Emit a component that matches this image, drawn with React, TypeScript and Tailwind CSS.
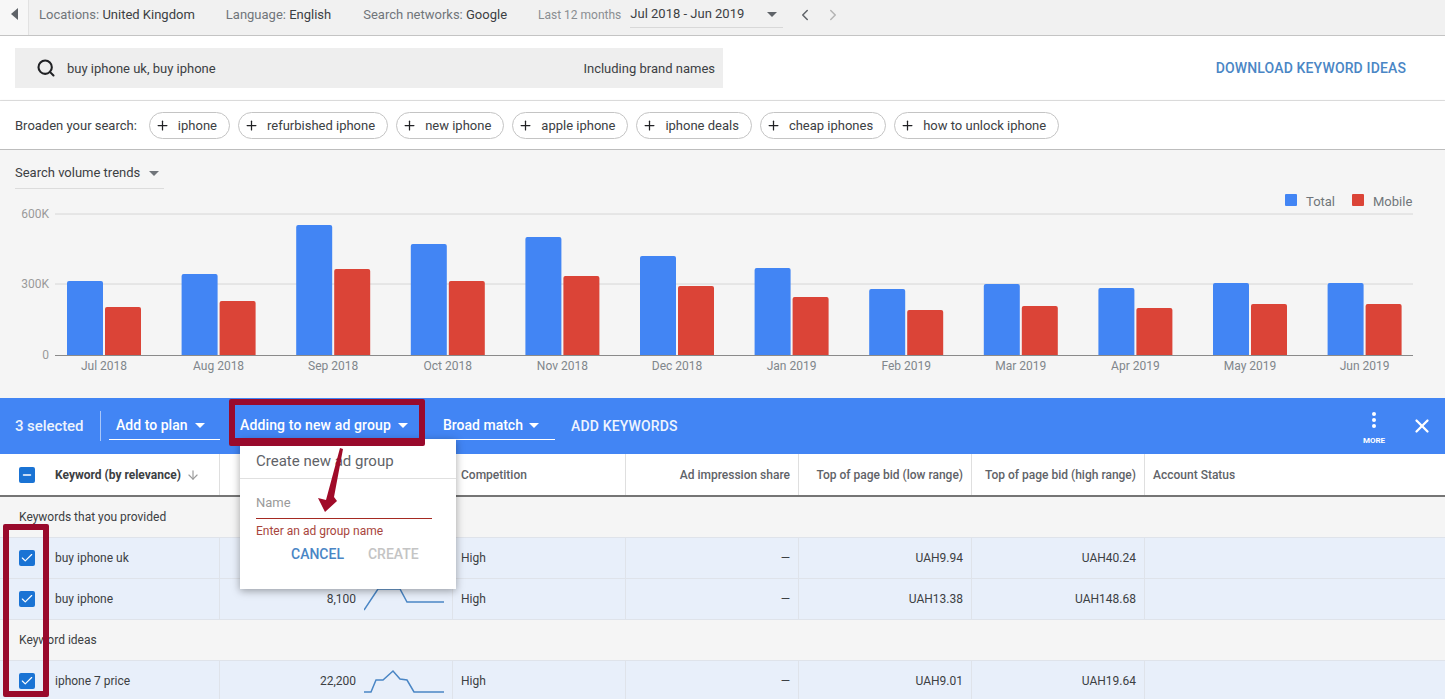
import { ChevronLeft, ChevronRight, Plus, Search, X, ArrowDown, Check, Minus } from 'lucide-react';

const chips = ['iphone', 'refurbished iphone', 'new iphone', 'apple iphone', 'iphone deals', 'cheap iphones', 'how to unlock iphone'];

const months = [
  { label: 'Jul 2018', total: 281, mobile: 307 },
  { label: 'Aug 2018', total: 274, mobile: 301 },
  { label: 'Sep 2018', total: 225, mobile: 269 },
  { label: 'Oct 2018', total: 244, mobile: 281 },
  { label: 'Nov 2018', total: 237, mobile: 276 },
  { label: 'Dec 2018', total: 256, mobile: 286 },
  { label: 'Jan 2019', total: 268, mobile: 297 },
  { label: 'Feb 2019', total: 289, mobile: 310 },
  { label: 'Mar 2019', total: 284, mobile: 306 },
  { label: 'Apr 2019', total: 288, mobile: 308 },
  { label: 'May 2019', total: 283, mobile: 304 },
  { label: 'Jun 2019', total: 283, mobile: 304 },
];

const BASE = 355;
const TOP = 150;

function Caret({ className }: { className: string }) {
  return (
    <svg className={className} width="10" height="5" viewBox="0 0 10 5">
      <path d="M0 0h10L5 5z" fill="currentColor" />
    </svg>
  );
}

function RowCheck() {
  return (
    <span className="flex h-4 w-4 items-center justify-center rounded-[2px] bg-[#1a73d4]">
      <Check className="h-3.5 w-3.5 text-white" strokeWidth={2} />
    </span>
  );
}

function Spark({ points }: { points: string }) {
  return (
    <svg width="80" height="40" viewBox="0 0 80 40" className="ml-2 shrink-0">
      <polyline points={points} fill="none" stroke="#4a86c5" strokeWidth="1.5" />
    </svg>
  );
}

function Row({ name, count, spark, low, high }: { name: string; count?: string; spark: string; low: string; high: string }) {
  return (
    <div className="flex h-[41px] shrink-0 border-b border-[#dfe3ea] bg-[#e8effa] text-xs text-[#3c4043]">
      <div className="flex w-[220px] shrink-0 items-center border-r border-[#dfe3ea] pl-[19px]">
        <RowCheck />
        <span className="ml-5">{name}</span>
      </div>
      <div className="flex w-[233px] shrink-0 items-center justify-end border-r border-[#dfe3ea] pr-2">
        {count && <span>{count}</span>}
        <Spark points={spark} />
      </div>
      <div className="flex w-[173px] shrink-0 items-center border-r border-[#dfe3ea] pl-2">High</div>
      <div className="flex w-[173px] shrink-0 items-center justify-end border-r border-[#dfe3ea] pr-2">—</div>
      <div className="flex w-[173px] shrink-0 items-center justify-end border-r border-[#dfe3ea] pr-2">{low}</div>
      <div className="flex w-[173px] shrink-0 items-center justify-end border-r border-[#dfe3ea] pr-2">{high}</div>
      <div className="flex-1" />
    </div>
  );
}

function GroupRow({ label }: { label: string }) {
  return (
    <div className="flex h-[41px] shrink-0 items-center border-b border-[#dfe3ea] bg-[#f5f5f5] pl-[19px] text-xs text-[#3c4043]">
      {label}
    </div>
  );
}

export default function App() {
  return (
    <div className="relative h-[699px] w-[1445px] overflow-hidden bg-white font-['Roboto',sans-serif] text-[#3c4043]">
      {/* filter summary */}
      <div className="flex h-9 items-center border-b border-[#c4c4c4] bg-[#f1f1f1] pb-[6px] text-[13px]">
        <div className="-mb-[6px] flex h-[35px] w-[29px] items-center justify-center border-r border-[#e2e2e2] bg-[#f7f7f7] pb-2">
          <svg width="7" height="12" viewBox="0 0 7 12"><path d="M7 0v12L0 6z" fill="#5f6368" /></svg>
        </div>
        <span className="ml-[10px] text-[#70757a]">Locations: <span className="text-[#3c4043]">United Kingdom</span></span>
        <span className="ml-[31px] text-[#70757a]">Language: <span className="text-[#3c4043]">English</span></span>
        <span className="ml-[32px] text-[#70757a]">Search networks: <span className="text-[#3c4043]">Google</span></span>
        <span className="ml-[31px] text-xs text-[#8a8e92]">Last 12 months</span>
        <div className="ml-[9px] flex h-[26px] w-[153px] items-center border-b border-[#d8d8d8]">
          <span>Jul 2018 - Jun 2019</span>
          <Caret className="ml-auto mr-[6px] text-[#5f6368]" />
        </div>
        <ChevronLeft className="ml-[13px] h-[18px] w-[18px] text-[#5f6368]" />
        <ChevronRight className="ml-[10px] h-[18px] w-[18px] text-[#b4b4b4]" />
      </div>

      {/* search */}
      <div className="flex h-[65px] items-center border-b border-[#e4e4e4] pl-[15px]">
        <div className="flex h-10 w-[708px] items-center bg-[#eeeeee] pl-[21px] pr-2 pt-[1px] text-[13px]">
          <Search className="-mt-[2px] h-5 w-5 text-[#202124]" strokeWidth={2.5} />
          <span className="ml-[11px]">buy iphone uk, buy iphone</span>
          <span className="ml-auto">Including brand names</span>
        </div>
        <span className="ml-auto mr-[39px] text-sm font-medium tracking-[0.14px] text-[#4a86c5]">DOWNLOAD KEYWORD IDEAS</span>
      </div>

      {/* broaden */}
      <div className="relative flex h-[49px] items-center border-b border-[#bdbdbd] pl-[15px] pt-[1px] text-[13px] shadow-[0_1px_3px_rgba(0,0,0,0.25)]">
        <span>Broaden your search:</span>
        <div className="ml-3 flex gap-2">
          {chips.map(chip => (
            <span key={chip} className="flex h-[27px] items-center rounded-[14px] border border-[#c4c4c4] bg-white pl-[5px] pr-3">
              <Plus className="h-[15px] w-[15px] text-[#202124]" strokeWidth={2} />
              <span className="ml-2">{chip}</span>
            </span>
          ))}
        </div>
      </div>

      {/* trends */}
      <div className="relative h-[248px] bg-[#f5f5f5]">
        <div className="ml-[15px] flex h-[39px] w-[149px] items-center border-b border-[#dcdcdc] pt-2 text-[13px]">
          <span>Search volume trends</span>
          <Caret className="ml-[9px] text-[#70757a]" />
        </div>
        <svg width="1445" height="248" viewBox="0 0 1445 248" className="absolute left-0 top-0 font-['Roboto',sans-serif]">
          <line x1="55" x2="1413" y1={214 - TOP} y2={214 - TOP} stroke="#d6d6d6" />
          <line x1="55" x2="1413" y1={284 - TOP} y2={284 - TOP} stroke="#d6d6d6" />
          <text x="49" y={218 - TOP} textAnchor="end" fontSize="12" fill="#9a9a9a">600K</text>
          <text x="49" y={288 - TOP} textAnchor="end" fontSize="12" fill="#9a9a9a">300K</text>
          <text x="49" y={359 - TOP} textAnchor="end" fontSize="12" fill="#9a9a9a">0</text>
          {months.map((m, i) => {
            const x = 67 + i * 114.6;
            return (
              <g key={m.label}>
                <path d={`M${x} ${BASE - TOP}V${m.total - TOP + 2}q0-2 2-2h32q2 0 2 2V${BASE - TOP}z`} fill="#4285f4" />
                <path d={`M${x + 38} ${BASE - TOP}V${m.mobile - TOP + 2}q0-2 2-2h32q2 0 2 2V${BASE - TOP}z`} fill="#db4437" />
                <text x={x + 37} y={370 - TOP} textAnchor="middle" fontSize="12" fill="#80868b">{m.label}</text>
              </g>
            );
          })}
          <line x1="55" x2="1413" y1={355.5 - TOP} y2={355.5 - TOP} stroke="#8a8a8a" />
          <rect x="1285" y={194 - TOP} width="12" height="12" rx="1" fill="#4285f4" />
          <text x="1306" y={206 - TOP} fontSize="13" fill="#70757a">Total</text>
          <rect x="1352" y={194 - TOP} width="12" height="12" rx="1" fill="#db4437" />
          <text x="1373" y={206 - TOP} fontSize="13" fill="#70757a">Mobile</text>
        </svg>
      </div>

      {/* selection bar */}
      <div className="flex h-[56px] items-center whitespace-nowrap bg-[#4285f4] pl-[15px] text-[14px] font-medium text-white">
        <span className="w-[85px] text-[15px] tracking-[-0.08px] opacity-90">3 selected</span>
        <span className="h-[30px] border-l border-[#a9c7f9]" />
        <div className="ml-2 flex h-[28px] w-[111px] items-center border-b border-white pl-[7px]">
          <span className="tracking-[0.03px]">Add to plan</span>
          <Caret className="ml-[7px] text-white" />
        </div>
        <div className="ml-[20px] flex h-[28px] w-[175px] items-center border-b border-white">
          <span className="tracking-[0.13px]">Adding to new ad group</span>
          <Caret className="ml-[7px] text-white" />
        </div>
        <div className="ml-[19px] flex h-[28px] w-[121px] items-center border-b border-white pl-[9px]">
          <span>Broad match</span>
          <Caret className="ml-[6px] text-white" />
        </div>
        <span className="ml-[16px] tracking-[0.15px] text-[#eef4ff]">ADD KEYWORDS</span>
        <div className="ml-auto flex w-[40px] flex-col items-center pt-[6px]">
          <span className="flex flex-col gap-[2px]">
            <span className="h-1 w-1 rounded-full bg-white" />
            <span className="h-1 w-1 rounded-full bg-white" />
            <span className="h-1 w-1 rounded-full bg-white" />
          </span>
          <span className="mt-[7px] text-[8px] font-bold">MORE</span>
        </div>
        <X className="ml-[17px] mr-[12px] h-[22px] w-[22px] text-white" strokeWidth={2.5} />
      </div>

      {/* table */}
      <div className="flex h-[43px] border-b-2 border-[#757575] bg-white text-xs font-medium text-[#5f6368]">
        <div className="flex w-[220px] shrink-0 items-center border-r border-[#dfdfdf] pl-[19px]">
          <span className="flex h-4 w-4 items-center justify-center rounded-[2px] bg-[#1a73d4]">
            <Minus className="h-3 w-3 text-white" strokeWidth={3} />
          </span>
          <span className="ml-5 font-bold text-[#3c4043]">Keyword (by relevance)</span>
          <ArrowDown className="ml-[5px] h-[14px] w-[14px] text-[#9a9a9a]" />
        </div>
        <div className="w-[233px] shrink-0 border-r border-[#dfdfdf]" />
        <div className="flex w-[173px] shrink-0 items-center border-r border-[#dfdfdf] pl-2">Competition</div>
        <div className="flex w-[173px] shrink-0 items-center justify-end border-r border-[#dfdfdf] pr-2">Ad impression share</div>
        <div className="flex w-[173px] shrink-0 items-center justify-end border-r border-[#dfdfdf] pr-2">Top of page bid (low range)</div>
        <div className="flex w-[173px] shrink-0 items-center justify-end border-r border-[#dfdfdf] pr-2">Top of page bid (high range)</div>
        <div className="flex flex-1 items-center pl-2">Account Status</div>
      </div>
      <GroupRow label="Keywords that you provided" />
      <Row name="buy iphone uk" spark="0,31 14,10 36,10 43,23 80,23" low="UAH9.94" high="UAH40.24" />
      <Row name="buy iphone" count="8,100" spark="0,31 14,10 36,10 43,23 80,23" low="UAH13.38" high="UAH148.68" />
      <GroupRow label="Keyword ideas" />
      <Row name="iphone 7 price" count="22,200" spark="0,31 7,31 12,19 19,19 29,10 36,18 43,19 50,31 80,31" low="UAH9.01" high="UAH19.64" />

      {/* ad group popup */}
      <div className="absolute left-[240px] top-[439px] z-10 h-[150px] w-[216px] bg-white shadow-[0_2px_8px_rgba(0,0,0,0.35)]">
        <div className="flex h-[40px] items-center border-b border-[#e0e0e0] pl-4 pt-[5px] text-[15px] text-[#5f6368]">Create new ad group</div>
        <div className="ml-4 mr-6 mt-4 border-b border-[#a52a22] pb-[7px] text-[13px] leading-4 text-[#9a9a9a]">Name</div>
        <div className="ml-4 mt-[4px] text-xs leading-4 text-[#a8453c]">Enter an ad group name</div>
        <div className="mt-[5px] flex pl-[51px] text-sm font-medium">
          <span className="text-[#4a86c5]">CANCEL</span>
          <span className="ml-[24px] text-[#c4c4c4]">CREATE</span>
        </div>
      </div>

      {/* annotations */}
      <div className="absolute left-[229px] top-[399px] z-20 h-[47px] w-[196px] rounded-[2px] border-[6px] border-b-8 border-[#990a2c]" />
      <div className="absolute left-[3px] top-[524px] z-20 h-[173px] w-[46px] rounded-[2px] border-[6px] border-[#990a2c]" />
      <svg width="40" height="70" viewBox="0 0 40 70" className="absolute left-[310px] top-[447px] z-20">
        <path d="M30 1L33 2L24 50L27 54L15 65L8 51L16 53z" fill="#a00a28" />
      </svg>
    </div>
  );
}
